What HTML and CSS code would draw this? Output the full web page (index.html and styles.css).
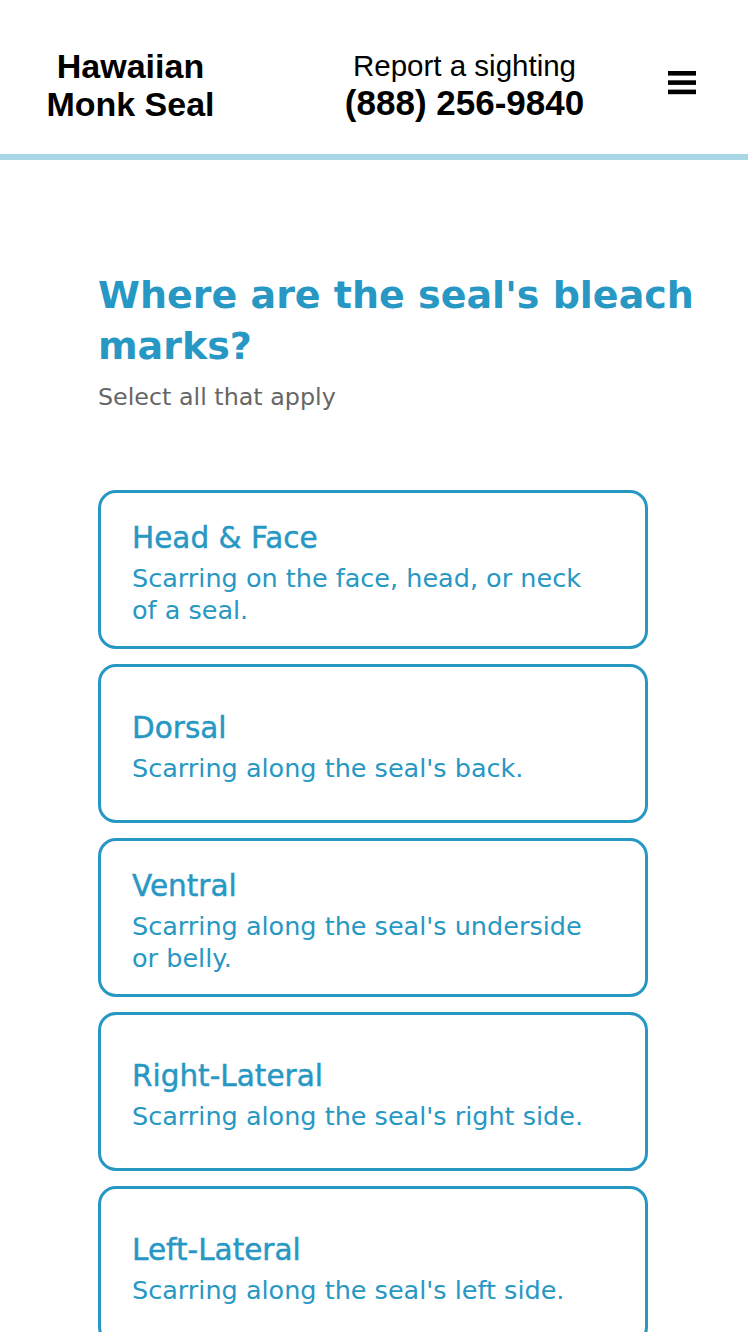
FILE: index.html
```html
<!DOCTYPE html>
<html lang="en">
<head>
<meta charset="utf-8">
<title>Hawaiian Monk Seal</title>
<link rel="stylesheet" href="styles.css">
</head>
<body>
<header class="site-header">
  <div class="logo">Hawaiian<br>Monk Seal</div>
  <div class="report">
    <div class="report-label">Report a sighting</div>
    <div class="report-phone">(888) 256-9840</div>
  </div>
  <button class="menu" aria-label="Menu">
    <svg width="28" height="24" viewBox="0 0 28 24"><rect x="0" y="0" width="28" height="4.6"/><rect x="0" y="9.3" width="28" height="4.6"/><rect x="0" y="18.6" width="28" height="4.6"/></svg>
  </button>
</header>
<main class="content">
  <h1 class="question">Where are the seal's bleach marks?</h1>
  <p class="hint">Select all that apply</p>
  <div class="options">
    <div class="option"><div class="opt-title">Head &amp; Face</div><div class="opt-desc">Scarring on the face, head, or neck of a seal.</div></div>
    <div class="option"><div class="opt-title">Dorsal</div><div class="opt-desc">Scarring along the seal's back.</div></div>
    <div class="option"><div class="opt-title">Ventral</div><div class="opt-desc">Scarring along the seal's underside or belly.</div></div>
    <div class="option"><div class="opt-title">Right-Lateral</div><div class="opt-desc">Scarring along the seal's right side.</div></div>
    <div class="option"><div class="opt-title">Left-Lateral</div><div class="opt-desc">Scarring along the seal's left side.</div></div>
  </div>
</main>
</body>
</html>
```
FILE: styles.css
```css
* { box-sizing: border-box; }
html, body { margin: 0; padding: 0; background: #fff; }
body { font-family: "DejaVu Sans", "Open Sans", sans-serif; }

.site-header {
  height: 160px;
  border-bottom: 6px solid #a9d7e5;
  display: grid;
  grid-template-columns: 261px 407px 28px;
  align-items: center;
  padding-top: 16px;
  font-family: "Liberation Sans", Arial, sans-serif;
  color: #000;
}
.logo {
  text-align: center;
  font-weight: 700;
  font-size: 34px;
  line-height: 38px;
}
.report { text-align: center; }
.report-label { font-size: 29.5px; line-height: 36px; }
.report-phone { font-size: 35px; line-height: 38px; font-weight: 700; }
.menu {
  border: 0; background: none; padding: 0; margin: -4px 0 0 0;
  width: 28px; height: 24px; display: block;
}
.menu svg { display: block; fill: #000; }

.content { padding: 110px 20px 0 98px; }
.question {
  margin: 0;
  max-width: 620px;
  font-weight: 700;
  font-size: 38px;
  line-height: 51px;
  color: #2797c3;
}
.hint {
  margin: 10px 0 0;
  font-size: 23.8px;
  line-height: 30px;
  color: #666;
}
.options {
  margin-top: 78px;
  width: 550px;
  display: flex;
  flex-direction: column;
  gap: 15px;
}
.option {
  height: 159px;
  border: 3px solid #2797c3;
  border-radius: 18px;
  padding: 7px 43px 0 31px;
  display: flex;
  flex-direction: column;
  justify-content: center;
  color: #2797c3;
}
.opt-title {
  font-size: 29.5px;
  line-height: 36px;
  -webkit-text-stroke: 0.45px currentColor;
  margin-bottom: 6px;
}
.opt-desc { font-size: 25.5px; line-height: 32px; }
```
